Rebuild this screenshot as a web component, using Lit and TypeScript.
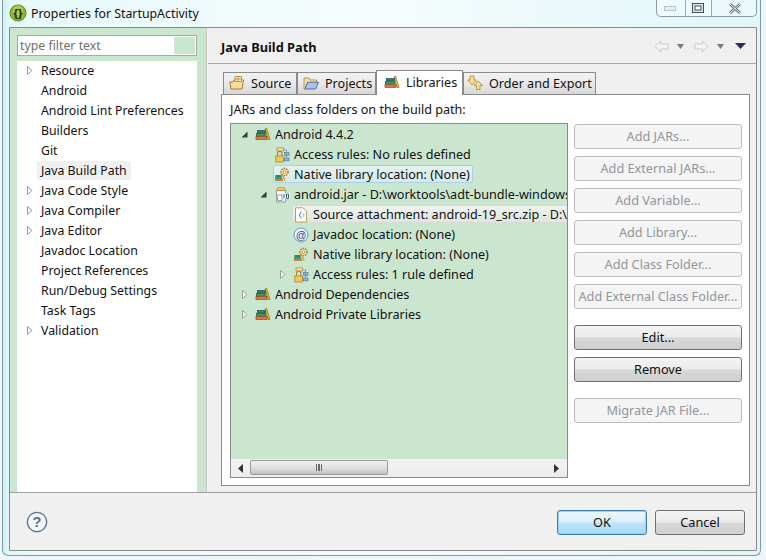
import { LitElement, html, css, svg } from "lit";
import { customElement } from "lit/decorators.js";

const ic = (c: unknown) => html`<svg class="ic" width="16" height="16" viewBox="0 0 16 16">${c}</svg>`;
const books = svg`
  <path d="M11.5 1 L15 12.5 L13 12.5 L10 2Z" fill="#f0b93a" stroke="#9a6b10" stroke-width=".7"/>
  <rect x="2.5" y="3.5" width="8" height="2.6" fill="#2f7f78" stroke="#234a60" stroke-width=".7"/>
  <rect x="1.5" y="6.3" width="9" height="2.8" fill="#3f9a5a" stroke="#2c6038" stroke-width=".7"/>
  <rect x="1" y="9.4" width="11" height="3" fill="#d8754a" stroke="#8a4a28" stroke-width=".7"/>`;
const gear = svg`
  <circle cx="10.5" cy="5" r="3.6" fill="#f3d7a0" stroke="#a8783a" stroke-width="1.4" stroke-dasharray="1.6 1"/>
  <circle cx="10.5" cy="5" r="1.3" fill="#fff" stroke="#a8783a" stroke-width=".6"/>
  <path d="M8 7 L11 13.5" stroke="#e0a030" stroke-width="1.7"/>
  <rect x="1.5" y="8" width="6" height="2" fill="#2f7f78"/>
  <rect x="1" y="10" width="7" height="2" fill="#3f9a5a"/>
  <rect x="1" y="12" width="8" height="2" fill="#d8754a"/>`;
const access = svg`
  <rect x="3" y=".8" width="6.5" height="3.2" fill="#f7dd9a" stroke="#b08a3a" stroke-width=".7"/>
  <rect x="10.5" y="5.5" width="4.5" height="2.8" fill="#8fb4dc" stroke="#4a74a8" stroke-width=".6"/>
  <rect x="10.5" y="11" width="4.5" height="2.8" fill="#8fb4dc" stroke="#4a74a8" stroke-width=".6"/>
  <path d="M9 3 H12.5 V11" fill="none" stroke="#7a8a9a" stroke-width=".8"/>
  <path d="M3.5 9 V6.5 a2.2 2.2 0 0 1 4.4 0 V9" fill="none" stroke="#a08040" stroke-width="1.1"/>
  <rect x="1.8" y="9" width="7.6" height="6" fill="#f2c84e" stroke="#a07820" stroke-width=".7"/>`;
const jar = svg`
  <path d="M2.5 3.5 H11.5 V15 H2.5Z" fill="#f7f7f0" stroke="#8a8a80" stroke-width=".8"/>
  <rect x="3" y=".8" width="8" height="2.8" rx="1" fill="#f2d27a" stroke="#a08030" stroke-width=".7"/>
  <rect x="3.8" y="8" width="4.2" height="5.5" fill="#fff" stroke="#5c7fa8" stroke-width=".7"/>
  <rect x="9" y="6" width="6.8" height="6" fill="#fff"/>
  <path d="M10 7 V11.5 M12.5 7 h2 v4.5 h-2z" fill="none" stroke="#2c4a7a" stroke-width=".9"/>`;
const src = svg`
  <path d="M2.5 .8 H10 L13.5 4.3 V15 H2.5Z" fill="#fff" stroke="#b8963c" stroke-width=".9"/>
  <path d="M8.5 5 C6.8 5 7.6 7.5 6 8 C7.6 8.5 6.8 11 8.5 11" fill="none" stroke="#2f6fb0" stroke-width="1"/>
  <path d="M9.5 7 h2 M9.5 9 h2" stroke="#6a8ab0" stroke-width=".8"/>`;
const at = svg`
  <circle cx="8" cy="8" r="7" fill="#e8f2fb" stroke="#6a98cc"/>
  <text x="8" y="11.5" font-size="10.5" text-anchor="middle" font-family="Liberation Sans" fill="#20508c">@</text>`;
const srcTab = svg`
  <path d="M.8 7 H4 L5 5 H14.5 L13 14 H2Z" fill="#f8dc9c" stroke="#a87c2c"/>
  <path d="M6 1.5 H12.5 V6.5 H6Z M9.2 1.5 V6.5 M6 4 H12.5" fill="#fff6dc" stroke="#b07a30" stroke-width=".8"/>`;
const projTab = svg`
  <path d="M1 3 H6 L7 5 H13.5 V7.5 H5 L2.5 14 H1Z" fill="#f6e2a4" stroke="#a08a40" stroke-width=".8"/>
  <path d="M4.5 7.2 H15.5 L12.5 14 H2Z" fill="#a8c4ee" stroke="#4a6cb0"/>`;
const orderTab = svg`
  <path d="M3 1 H7 V5 H9.5 L5 10 L.8 5 H3Z" fill="#fbe29a" stroke="#c08a28" stroke-width=".9"/>
  <path d="M9.5 14.5 H13 V10.5 H15.5 L11.2 6 L7 10.5 H9.5Z" fill="#fbe29a" stroke="#c08a28" stroke-width=".9"/>`;

const leftRows: [string, boolean, boolean][] = [
  ["Resource", true, false], ["Android", false, false], ["Android Lint Preferences", false, false],
  ["Builders", false, false], ["Git", false, false], ["Java Build Path", false, true],
  ["Java Code Style", true, false], ["Java Compiler", true, false], ["Java Editor", true, false],
  ["Javadoc Location", false, false], ["Project References", false, false], ["Run/Debug Settings", false, false],
  ["Task Tags", false, false], ["Validation", true, false],
];

type Row = { t: string; lvl: number; tw?: "o" | "c"; i: unknown; cls?: string };
const rows: Row[] = [
  { t: "Android 4.4.2", lvl: 0, tw: "o", i: books },
  { t: "Access rules: No rules defined", lvl: 1, i: access },
  { t: "Native library location: (None)", lvl: 1, i: gear, cls: "hl" },
  { t: "android.jar - D:\\worktools\\adt-bundle-windows", lvl: 1, tw: "o", i: jar },
  { t: "Source attachment: android-19_src.zip - D:\\w", lvl: 2, i: src, cls: "hl2" },
  { t: "Javadoc location: (None)", lvl: 2, i: at },
  { t: "Native library location: (None)", lvl: 2, i: gear },
  { t: "Access rules: 1 rule defined", lvl: 2, tw: "c", i: access },
  { t: "Android Dependencies", lvl: 0, tw: "c", i: books },
  { t: "Android Private Libraries", lvl: 0, tw: "c", i: books },
];

const twisty = (k?: "o" | "c") =>
  html`<svg class="tw" width="9" height="11" viewBox="0 0 9 11">${k === "o"
    ? svg`<path d="M1.5 8.5 H7.5 V2.5Z" fill="#3c3c3c"/>`
    : k === "c"
    ? svg`<path d="M2.5 1.5 L7 5.5 L2.5 9.5Z" fill="#fff" stroke="#9a9a9a"/>`
    : null}</svg>`;

@customElement("app-root")
export class AppRoot extends LitElement {
  static styles = css`
    :host {
      display: block; width: 766px; height: 560px; overflow: hidden; position: relative;
      font-family: "Noto Sans", sans-serif; font-size: 12.6px; color: #111;
      background: #eef6f8;
    }
    .frame { display: flex; flex-direction: column; height: 556px; box-sizing: border-box; margin: 0 5px 0 2px; padding: 0 3px 4px 6px;
      border: 1px solid #7f9aa5; border-top: none; border-radius: 0 0 6px 6px;
      background: linear-gradient(90deg, #cdf1f5 0, #e6f9fa 8px, #f6fcfd 50%, #e0f6f9 99%); }
    .title { height: 27px; display: flex; align-items: center; gap: 4px; font-size: 12.35px; flex: none; box-sizing: border-box; padding-bottom: 1px; }
    .title svg { flex: none; }
    .ctrls { position: absolute; top: 0; right: 9px; width: 101px; height: 17px; display: grid; grid-template-columns: 28px 26px 47px;
      border: 1px solid #8c9aa4; border-top: none; border-radius: 0 0 5px 5px; box-sizing: border-box; background: rgba(255,255,255,.35); }
    .ctrls div { display: flex; align-items: center; justify-content: center; border-left: 1px solid #9aa8b0; }
    .ctrls div:first-child { border-left: none; }
    .dlg { flex: 1; border: 1px solid #8a8a8a; background: #f0f0f0; display: flex; flex-direction: column; min-height: 0; border-radius: 1px; }
    .main { flex: 1; display: flex; min-height: 0; }
    .left { width: 197px; flex: none; background: #cbe6cf; padding: 7px 9px 0 7px; box-sizing: border-box; display: flex; flex-direction: column; gap: 5px; border-right: 1px solid #c4c4c4; }
    .filter { height: 21px; flex: none; border: 1px solid #a8a8a8; background: #fff; display: flex; align-items: center; justify-content: space-between; padding: 0 1px 0 2px; color: #6f6f6f; font-size: 12.3px; box-sizing: border-box; }
    .filter span { padding-bottom: 1px; }
    .filter i { width: 21px; height: 17px; background: #cbe6cf; display: block; }
    .ltree { flex: 1; background: #fff; font-size: 12.3px; }
    .lr { height: 20px; display: flex; align-items: center; padding: 0 0 2px 8px; box-sizing: border-box; white-space: nowrap; }
    .lr .tw { margin-right: 7px; flex: none; }
    .lr.sel span { background: #f0f0f0; padding: 0 4px; margin-left: -4px; line-height: 19px; }
    .right { flex: 1; min-width: 0; display: flex; flex-direction: column; padding-left: 13px; border-left: 1px solid #f6f6f6; }
    .head { height: 35px; margin-left: -13px; padding-left: 13px; border-bottom: 1px solid #a8a8a8; display: flex; align-items: center; justify-content: space-between; font-weight: 700; font-size: 12.8px; flex: none; box-sizing: content-box; }
    .head > span { padding-top: 3px; }
    .nav { display: flex; align-items: center; gap: 7px; padding: 1px 10px 0 0; }
    .nav .m2 { margin-left: 2px; }
    .nav .m3 { margin-left: 3px; }
    .tabs { display: flex; align-items: flex-end; height: 30px; flex: none; padding-left: 2px; position: relative; z-index: 1; }
    .tab { height: 22px; display: flex; align-items: center; gap: 6px; border: 1px solid #8a8a8a; border-bottom: none; box-sizing: border-box; background: linear-gradient(#f2f2f2, #e9e9e9 50%, #d6d6d6); white-space: nowrap; padding-bottom: 1px; flex: none; }
    .t1 { width: 74px; padding-left: 5px; }
    .t2 { width: 79px; padding-left: 5px; }
    .t3 { width: 87px; padding-left: 7px; }
    .t4 { width: 133px; padding-left: 3px; }
    .tab.on { height: 25px; background: #fff; margin-bottom: -1px; padding-bottom: 1px; border-color: #8a8a8a; }
    .panel { width: 529px; height: 392px; border: 1px solid #8a8a8a; background: #fff; box-sizing: border-box; padding: 0 7px 0 8px; display: flex; flex-direction: column; flex: none; }
    .lbl { height: 28px; flex: none; display: flex; align-items: center; }
    .cols { display: flex; gap: 6px; align-items: flex-start; }
    .tree { width: 338px; height: 355px; border: 1px solid #8a8a8a; box-sizing: border-box; background: #cbe6cf; display: flex; flex-direction: column; flex: none; overflow: hidden; }
    .rows { flex: 1; overflow: hidden; }
    .r { height: 20px; display: flex; align-items: center; white-space: nowrap; }
    .r .tw { margin-right: 6px; flex: none; }
    .it { display: flex; align-items: center; gap: 2px; height: 18px; box-sizing: border-box; flex: none; }
    .it .ic { flex: none; margin-top: 1px; }
    .it span { padding-left: 2px; }
    .hl .it { border: 1px solid #a8d0ea; border-radius: 2px; background: linear-gradient(#e4f2f0, #d6eaea); margin-left: -1px; padding-right: 2px; }
    .hl2 .it { border: 1px solid #d4dcd4; border-right: none; border-radius: 2px 0 0 2px; background: linear-gradient(#f0f3ee, #dfe6df); margin-left: -1px; }
    .sb { height: 18px; flex: none; background: linear-gradient(#f3f3f3, #ececec); display: flex; align-items: center; justify-content: space-between; padding: 0 8px 0 7px; box-sizing: border-box; position: relative; }
    .thumb { position: absolute; left: 19px; top: 1px; width: 138px; height: 15px; border: 1px solid #9a9a9a; border-radius: 2px; box-sizing: border-box; background: linear-gradient(#f2f2f2, #e0e0e0 50%, #c2c2c2); display: flex; align-items: center; justify-content: center; gap: 1px; }
    .thumb b { width: 1.5px; height: 7px; background: #6a6a6a; display: block; }
    .btns { width: 168px; display: flex; flex-direction: column; gap: 7px; flex: none; margin-top: 1px; }
    .b { height: 25px; border: 1px solid #707070; border-radius: 3px; box-sizing: border-box; display: flex; align-items: center; justify-content: center; background: linear-gradient(#f3f3f3, #ebebeb 48%, #d8d8d8 52%, #cfcfcf); white-space: nowrap; padding-bottom: 1px; font-size: 12.7px; }
    .b.d { border-color: #bcbcbc; background: #f4f4f4; color: #8f969c; }
    .mt1 { margin-top: 9px; }
    .mt2 { margin-top: 9px; }
    .foot { height: 57px; flex: none; border-top: 1px solid #a0a0a0; display: flex; align-items: center; padding: 0 11px 0 16px; justify-content: space-between; background: #f0f0f0; }
    .acts { display: flex; gap: 8px; padding-top: 2px; }
    .ok { width: 90px; border-color: #3c7fb1; background: linear-gradient(#ecf7fd, #dbf0fb 48%, #bde4f8 52%, #a9daf5); box-shadow: inset 0 0 0 1px #8fd3f5; }
    .cancel { width: 90px; }
  `;

  render() {
    return html`
      <div class="frame">
        <div class="title">
          <svg width="18" height="18" viewBox="0 0 18 18">
            <circle cx="9" cy="9" r="8" fill="#8cb82c" stroke="#5f8a14"/>
            <circle cx="9" cy="6.5" r="5" fill="#c0dc60" opacity=".6"/>
            <text x="9" y="13" font-size="11.5" font-weight="700" text-anchor="middle" font-family="Liberation Sans" fill="#222">{}</text>
          </svg>
          <span>Properties for StartupActivity</span>
        </div>
        <div class="ctrls">
          <div><svg width="14" height="8"><rect x=".5" y="2.5" width="11" height="4" fill="#e4eef2" stroke="#b8c4cc"/></svg></div>
          <div><svg width="13" height="11"><rect x=".5" y=".5" width="11" height="9" fill="#dfe6ea" stroke="#444e58"/><rect x="3" y="3" width="6" height="4" fill="#fff" stroke="#444e58"/></svg></div>
          <div><svg width="14" height="11"><path d="M2 1 L12 10 M12 1 L2 10" stroke="#5c6670" stroke-width="2.6"/><path d="M2 1 L12 10 M12 1 L2 10" stroke="#fff" stroke-width="1"/></svg></div>
        </div>
        <div class="dlg">
          <div class="main">
            <div class="left">
              <div class="filter"><span>type filter text</span><i></i></div>
              <div class="ltree">
                ${leftRows.map(([t, tw, sel]) => html`<div class="lr ${sel ? "sel" : ""}">${twisty(tw ? "c" : undefined)}<span>${t}</span></div>`)}
              </div>
            </div>
            <div class="right">
              <div class="head">
                <span>Java Build Path</span>
                <div class="nav">
                  <svg width="15" height="13" viewBox="0 0 15 13"><path d="M6.5 1 L1 6.5 L6.5 12 V9 H14 V4 H6.5Z" fill="#f4f4f0" stroke="#c8c8c4"/></svg>
                  <svg width="9" height="5"><path d="M1 0 H8 L4.5 5Z" fill="#7a7a7a"/></svg>
                  <svg class="m2" width="15" height="13" viewBox="0 0 15 13"><path d="M8.5 1 L14 6.5 L8.5 12 V9 H1 V4 H8.5Z" fill="#f4f4f0" stroke="#c8c8c4"/></svg>
                  <svg width="9" height="5"><path d="M1 0 H8 L4.5 5Z" fill="#7a7a7a"/></svg>
                  <svg class="m3" width="11" height="6"><path d="M0 0 H11 L5.5 6Z" fill="#2f2a5c"/></svg>
                </div>
              </div>
              <div class="tabs">
                <div class="tab t1">${ic(srcTab)}Source</div>
                <div class="tab t2">${ic(projTab)}Projects</div>
                <div class="tab t3 on">${ic(books)}Libraries</div>
                <div class="tab t4">${ic(orderTab)}Order and Export</div>
              </div>
              <div class="panel">
                <div class="lbl">JARs and class folders on the build path:</div>
                <div class="cols">
                  <div class="tree">
                    <div class="rows">
                      ${rows.map((r) => html`<div class="r ${r.cls ?? ""}" style="padding-left:${[9, 28, 47][r.lvl]}px">
                        ${twisty(r.tw)}
                        <div class="it">${ic(r.i)}<span>${r.t}</span></div></div>`)}
                    </div>
                    <div class="sb">
                      <svg width="5" height="9"><path d="M5 0 V9 L0 4.5Z" fill="#333"/></svg>
                      <div class="thumb"><b></b><b></b><b></b></div>
                      <svg width="5" height="9"><path d="M0 0 V9 L5 4.5Z" fill="#333"/></svg>
                    </div>
                  </div>
                  <div class="btns">
                    <div class="b d">Add JARs...</div>
                    <div class="b d">Add External JARs...</div>
                    <div class="b d">Add Variable...</div>
                    <div class="b d">Add Library...</div>
                    <div class="b d">Add Class Folder...</div>
                    <div class="b d">Add External Class Folder...</div>
                    <div class="b mt1">Edit...</div>
                    <div class="b">Remove</div>
                    <div class="b d mt2">Migrate JAR File...</div>
                  </div>
                </div>
              </div>
            </div>
          </div>
          <div class="foot">
            <svg width="22" height="22" viewBox="0 0 22 22">
              <circle cx="11" cy="11" r="9.7" fill="#f4f6f9" stroke="#5a6f90" stroke-width="1.3"/>
              <text x="11" y="16" font-size="14.5" font-weight="700" text-anchor="middle" font-family="Liberation Sans" fill="#5a6f90">?</text>
            </svg>
            <div class="acts">
              <div class="b ok">OK</div>
              <div class="b cancel">Cancel</div>
            </div>
          </div>
        </div>
      </div>
    `;
  }
}
